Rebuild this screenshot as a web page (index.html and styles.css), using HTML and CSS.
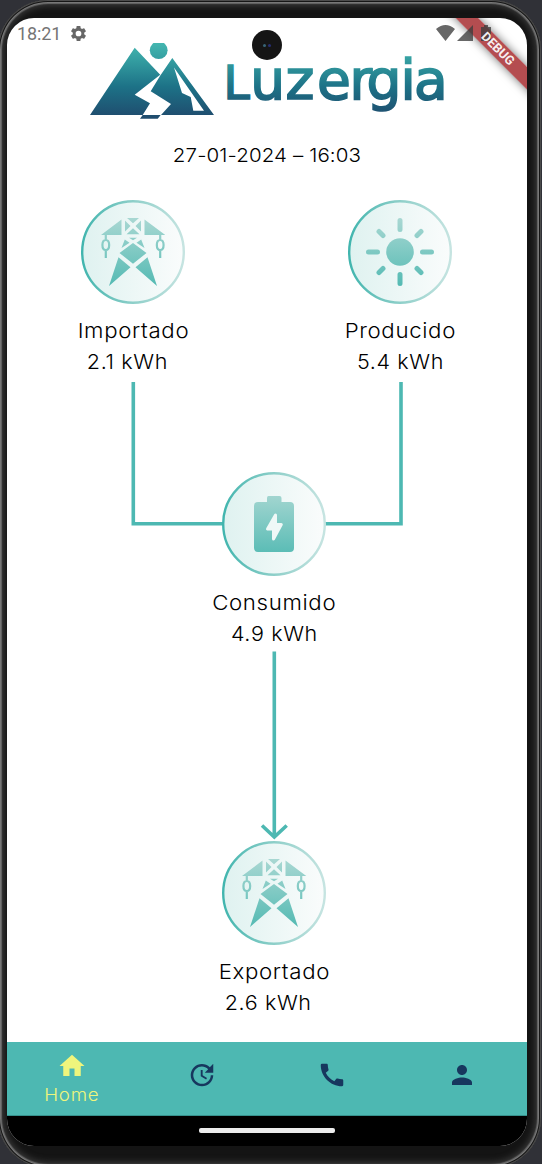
FILE: index.html
```html
<!DOCTYPE html>
<html lang="es">
<head>
<meta charset="utf-8">
<title>Luzergia</title>
<link rel="stylesheet" href="styles.css">
</head>
<body>
<svg class="defs" width="0" height="0" aria-hidden="true">
  <defs>
    <linearGradient id="disc" x1="0" x2="1" y1="0" y2="0"><stop offset="0" stop-color="#dff2f0"/><stop offset="1" stop-color="#fafcfc"/></linearGradient>
    <linearGradient id="ring" x1="0" x2="1" y1="0" y2="0"><stop offset="0" stop-color="#41b5ae"/><stop offset=".5" stop-color="#8ecfc9"/><stop offset="1" stop-color="#c6e4e1"/></linearGradient>
    <linearGradient id="ink" gradientUnits="userSpaceOnUse" x1="0" x2="0" y1="17" y2="86"><stop offset="0" stop-color="#aad8d3"/><stop offset="1" stop-color="#54bab3"/></linearGradient>
    <symbol id="pylon" viewBox="0 0 104 104">
      <circle cx="52" cy="52" r="50.8" fill="url(#disc)" stroke="url(#ring)" stroke-width="2.4"/>
      <g fill="url(#ink)">
        <path d="M20 35 40.5 19.5V35zM63.5 19.5 84.3 35H63.5z"/>
        <path d="M46 18H58L52 23.3zM44 20.5 49.5 26 44 31.5zM60 20.5 54.5 26 60 31.5zM52 28.3 58.5 34.3H45.5z"/>
        <path d="M48 37.7H56L52 40.3zM43.8 39.5 48.5 42.7 40.5 48zM60.2 39.5 55.5 42.7 63.5 48z"/>
        <path d="M52 43 65.5 53 52 63.8 38.5 53zM37.5 57.3 49.5 67.3 28 86zM66.5 57.3 54.5 67.3 76 86z"/>
      </g>
      <path d="M24.8 35V40M24.8 50V58M79.2 35V40M79.2 50V58M24.8 40C20.3 40 20.3 50 24.8 50S29.3 40 24.8 40ZM79.2 40C74.7 40 74.7 50 79.2 50S83.7 40 79.2 40Z" fill="none" stroke="url(#ink)" stroke-width="2.2"/>
    </symbol>
  </defs>
</svg>
<div class="phone">
  <div class="screen">
    <div class="status">
      <span class="clock">18:21</span>
      <svg class="gear" viewBox="0 0 24 24"><path d="M19.140 12.940c.04-.3.060-.61.060-.94s-.02-.64-.07-.94l2.030-1.580c.18-.14.230-.41.120-.61l-1.920-3.320c-.12-.22-.37-.29-.59-.22l-2.390.96c-.5-.38-1.030-.7-1.620-.94l-.36-2.540c-.04-.24-.24-.41-.48-.41h-3.840c-.24 0-.43.17-.47.41l-.36 2.540c-.59.24-1.130.57-1.620.94l-2.390-.96c-.22-.08-.47 0-.59.22L2.740 8.870c-.12.210-.08.470.120.610l2.030 1.580c-.05.3-.09.630-.09.940s.02.640.070.940l-2.030 1.580c-.18.140-.23.410-.12.610l1.920 3.320c.12.220.37.290.59.220l2.390-.96c.5.380 1.030.7 1.620.94l.36 2.540c.05.240.24.410.48.410h3.840c.24 0 .44-.17.470-.41l.36-2.540c.59-.24 1.130-.56 1.620-.94l2.390.96c.22.080.47 0 .59-.22l1.920-3.320c.12-.22.070-.47-.12-.61zM12 15.600a3.600 3.600 0 1 1 0-7.200 3.600 3.600 0 0 1 0 7.200z"/></svg>
      <svg class="signals" viewBox="0 0 58 16"><path d="M0 4Q9.500-4 19 4L9.500 16zM37 0V16H21zM48 0h4v2h3v14H45V2h3z"/></svg>
    </div>
    <div class="camera"><i></i><i></i></div>
    <div class="ribbon"></div>
    <div class="ribbon label">DEBUG</div>

    <header class="brand">
      <svg class="logo" viewBox="88 43 360 78">
        <defs><linearGradient id="brand" gradientUnits="userSpaceOnUse" x1="0" x2="0" y1="43" y2="118"><stop offset="0" stop-color="#44b7b0"/><stop offset=".25" stop-color="#329b9f"/><stop offset=".58" stop-color="#1d7287"/><stop offset="1" stop-color="#1f4b6d"/></linearGradient></defs>
        <g fill="url(#brand)">
          <circle cx="158.700" cy="50.200" r="8.900"/>
          <path d="M90 115 134.700 47.700 160.200 74.700 134.700 94.700 150 103.300 142.700 115zM160.300 75.500 172.300 58 214 115H161L171 104 150.700 91.300zM142.700 115H160.700L157.700 118.800H140z"/>
          <text class="wordmark" y="99.200" x="223.500 250.300 285.500 317 349.500 366.500 400.500 414"><tspan class="initial">L</tspan>uzergia</text>
        </g>
        <path d="M174 67.500 204 110.800H193.300L190.700 97 182 93z" fill="#fff"/>
      </svg>
      <time class="date">27-01-2024 – 16:03</time>
    </header>

    <main class="flow">
      <svg class="links" viewBox="0 0 520 860"><path d="M126.300 200V341.700H216M318 341.700H394V200M267.300 469.500V654M255 643.500 267.300 655 279.700 643.500"/></svg>
      <section class="node imported">
        <svg class="badge"><use href="#pylon"/></svg>
        <span class="name">Importado</span><span class="value short">2.1 kWh</span>
      </section>
      <section class="node produced">
        <svg class="badge" viewBox="0 0 104 104">
          <circle cx="52" cy="52" r="50.800" fill="url(#disc)" stroke="url(#ring)" stroke-width="2.400"/>
          <circle cx="52" cy="52" r="13.800" fill="url(#ink)"/>
          <path d="M52 20.500V29.500M52.010 74.500V83.500M20.500 51.900H29.500M74.500 51.900H83.500M31 31.500 35 35.500M73 31.500 69 35.500M31 72.500 35 68.500M73 72.500 69 68.500" fill="none" stroke="url(#ink)" stroke-width="5" stroke-linecap="round"/>
        </svg>
        <span class="name">Producido</span><span class="value">5.4 kWh</span>
      </section>
      <section class="node consumed">
        <svg class="badge" viewBox="0 0 104 104">
          <circle cx="52" cy="52" r="50.800" fill="url(#disc)" stroke="url(#ring)" stroke-width="2.400"/>
          <path d="M46.500 24H57.500Q59.500 24 59.500 26V30H68Q72 30 72 34V76Q72 80 68 80H36Q32 80 32 76V34Q32 30 36 30H45V26Q45 24 46.500 24Z" fill="url(#ink)"/>
          <path d="M53.500 43 45.500 57H51.500V67L59.300 52.500H53.500z" fill="#eff8f7" stroke="#eff8f7" stroke-width="3" stroke-linejoin="round"/>
        </svg>
        <span class="name">Consumido</span><span class="value">4.9 kWh</span>
      </section>
      <section class="node exported">
        <svg class="badge"><use href="#pylon"/></svg>
        <span class="name">Exportado</span><span class="value short">2.6 kWh</span>
      </section>
    </main>

    <nav class="tabs">
      <a class="tab active"><svg viewBox="0 0 24 24"><path d="M10 20v-6h4v6h5v-8h3L12 3 2 12h3v8z"/></svg><span>Home</span></a>
      <a class="tab"><svg viewBox="0 0 24 24"><path d="M21 10.120h-6.780l2.740-2.820c-2.730-2.700-7.150-2.800-9.880-.1-2.730 2.710-2.730 7.080 0 9.790s7.150 2.710 9.880 0C18.320 15.650 19 14.080 19 12.100h2c0 1.980-.88 4.550-2.640 6.290-3.510 3.480-9.210 3.480-12.720 0-3.500-3.470-3.530-9.110-.02-12.580s9.140-3.470 12.650 0L21 3zM12.500 8v4.250l3.500 2.080-.72 1.210L11 13V8z"/></svg></a>
      <a class="tab"><svg viewBox="0 0 24 24"><path d="M20.010 15.380c-1.230 0-2.420-.2-3.530-.56-.35-.12-.74-.03-1.010.24l-1.570 1.970c-2.830-1.350-5.480-3.900-6.890-6.830l1.950-1.660c.27-.28.350-.67.240-1.020-.37-1.110-.56-2.300-.56-3.530 0-.54-.45-.99-.99-.99H4.190C3.650 3 3 3.240 3 3.990 3 13.280 10.730 21 20.010 21c.71 0 .99-.63.990-1.180v-3.450c0-.54-.45-.99-.99-.99z"/></svg></a>
      <a class="tab"><svg viewBox="0 0 24 24"><path d="M12 12c2.210 0 4-1.790 4-4s-1.790-4-4-4-4 1.790-4 4 1.790 4 4 4zm0 2c-2.670 0-8 1.340-8 4v2h16v-2c0-2.660-5.330-4-8-4z"/></svg></a>
    </nav>
    <div class="gesture"><div class="handle"></div></div>
  </div>
</div>
</body>
</html>
```
FILE: styles.css
```css
* { box-sizing: border-box; }
body {
  margin: 0;
  height: 1164px;
  overflow: hidden;
  background: #303137;
  font-family: Inter, "Noto Sans", sans-serif;
}
.defs { position: absolute; }
.phone {
  width: 543px;
  height: 1168px;
  margin-left: -2px;
  padding: 18px 0 0 9px;
  border-radius: 50px;
  background: #141414;
  box-shadow: inset 0 0 0 1px #4c4c4c, inset 0 0 0 2px #161616, inset 0 0 0 3px #777, inset 0 0 1px 4px #666, inset 0 0 6px 6px #393939;
}
.screen {
  position: relative;
  display: flex;
  flex-direction: column;
  width: 520px;
  height: 1128px;
  border-radius: 27px;
  overflow: hidden;
  background: #fff;
}
.status {
  position: absolute;
  inset: 0 0 auto 0;
  z-index: 3;
  display: flex;
  align-items: center;
  height: 31px;
  padding: 0 33px 0 10px;
  fill: rgba(60, 60, 60, .78);
}
.clock { font: 18px/31px Roboto, sans-serif; color: #757575; letter-spacing: -.1px; width: 52px; }
.gear { width: 19px; height: 19px; }
.signals { width: 58px; height: 16px; margin-left: auto; margin-top: -1px; }
.camera {
  position: absolute;
  left: 245px;
  top: 12px;
  z-index: 4;
  display: flex;
  align-items: center;
  justify-content: center;
  gap: 2px;
  width: 30px;
  height: 30px;
  border-radius: 50%;
  background: #151515;
}
.camera i { width: 3px; height: 3px; border-radius: 50%; background: #386476; }
.camera i + i { background: #272f73; }
.ribbon {
  position: absolute;
  left: 410.500px;
  top: 22.500px;
  z-index: 2;
  width: 160px;
  height: 15.600px;
  transform: rotate(45deg);
  background: rgba(165, 41, 44, .83);
  box-shadow: 0 0 10px rgba(0, 0, 0, .55);
}
.label {
  z-index: 4;
  background: none;
  box-shadow: none;
  color: rgba(255, 255, 255, .93);
  font: 700 12.800px/16px Roboto, sans-serif;
  text-align: center;
}
.brand { height: 164px; padding-top: 25px; }
.logo { display: block; width: 360px; height: 78px; margin-left: 81px; }
.wordmark { font: 55px "DejaVu Sans", sans-serif; stroke: url(#brand); stroke-width: 1.700px; }
.initial { font-size: 47px; }
.date {
  display: block;
  margin-top: 19px;
  text-align: center;
  font-size: 19px;
  font-weight: 300;
  line-height: 32px;
  letter-spacing: .1px;
  transform: scaleX(1.080);
}
.flow { position: relative; flex: 1; }
.links { position: absolute; left: 0; top: 0; width: 520px; height: 860px; }
.links path { fill: none; stroke: #4db8b2; stroke-width: 3.600px; }
.node {
  position: absolute;
  display: flex;
  flex-direction: column;
  align-items: center;
  width: 150px;
  font-size: 20.500px;
  font-weight: 300;
  line-height: 30.500px;
  letter-spacing: .6px;
}
.imported { left: 51px; top: 18px; }
.produced { left: 318px; top: 18px; }
.consumed { left: 192px; top: 290px; }
.exported { left: 192px; top: 659px; }
.badge { width: 104px; height: 104px; margin-bottom: 12px; }
.name { transform: scaleX(1.085); }
.value { transform: scaleX(1.050); }
.short { padding-right: 11px; }
.tabs { display: flex; height: 74px; background: #4db8b2; border-bottom: 1px solid #36918d; }
.tab {
  display: flex;
  flex-direction: column;
  align-items: center;
  width: 130px;
  padding-top: 18px;
  fill: #17375e;
}
.tab svg { width: 30px; height: 30px; }
.active { padding-top: 9px; fill: #eff57c; color: #eff57c; font-size: 17.500px; font-weight: 300; line-height: 28px; letter-spacing: .7px; }
.active span { transform: scaleX(1.070); }
.gesture { display: flex; justify-content: center; height: 30px; padding-top: 12px; background: #000; }
.handle { width: 136px; height: 5px; border-radius: 2px; background: #ececec; }
```
